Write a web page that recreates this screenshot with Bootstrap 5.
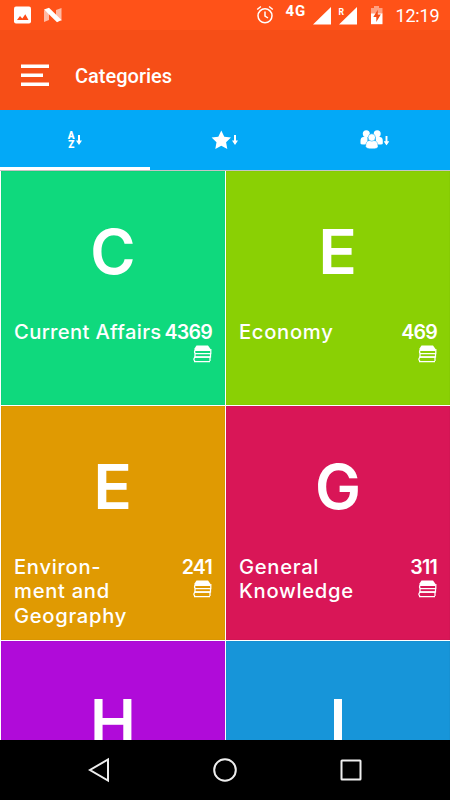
<!DOCTYPE html>
<html lang="en">
<head>
<meta charset="utf-8">
<meta name="viewport" content="width=device-width, initial-scale=1">
<title>Categories</title>
<link href="https://cdn.jsdelivr.net/npm/bootstrap@5.3.0/dist/css/bootstrap.min.css" rel="stylesheet">
<style>
html,body{height:800px;overflow:hidden}
body{font-family:Roboto,sans-serif;background:#fff}
svg{display:block;flex:none}
.screen{width:450px;height:800px}
.statusbar{height:30px;background:#ff5218}
.statusbar svg{width:450px;height:30px}
.appbar{height:80px;background:#f64e17;padding-left:21px;padding-top:11px}
.appbar h1{font-size:20px;font-weight:500;margin:0 0 0 26px;line-height:24px}
.appbar svg{margin-top:-1px}
.tabs{height:60px;background:#03a9f7}
.tabs button{border:0;background:none;padding:0;border-bottom:3px solid transparent}
.tabs button.active{border-color:#fff}
.grid{height:570px;padding-left:1px;border-top:1px solid #c5c5c5;display:grid;grid-template-columns:224px 224px;grid-auto-rows:234px;gap:1px;background:#fff;font-family:Inter,sans-serif}
.tile{padding:0 13px;box-shadow:inset 0 0 1px rgba(0,0,0,.25)}
.initial{height:149px;padding-top:35px;font-size:61.5px;font-weight:600;line-height:92px}
.initial span{display:inline-block}
.wide span{transform:scaleX(1.04)}
.label{font-size:20.2px;font-weight:500;line-height:24.4px;letter-spacing:.7px}
.label-tight{letter-spacing:.35px}
.count{width:48px;font-size:19.6px;font-weight:600;line-height:24.4px;letter-spacing:-.75px}
.count svg{margin-top:1px}
.sysbar{height:60px;padding:0 37px}
</style>
<script src="https://cdn.jsdelivr.net/npm/bootstrap@5.3.0/dist/js/bootstrap.bundle.min.js"></script>
</head>
<body>
<svg width="0" height="0" class="position-absolute">
<symbol id="books" viewBox="0 0 20 18"><path d="M4.500.5h11.500l2.500 3.500v2H2.500V3.500z" fill="#fff"/><path d="M18.800 4v4.500H3.500Q1.500 7 3.500 5M3 8.500v3.300h15.500V8.500M18 12v4M3 12.300q-2.300 1.800 0 3.700M2 16.500h16" fill="none" stroke="#fff" stroke-width="1.250"/><path d="M2 12.200h16.500" fill="none" stroke="#fff" stroke-width="1.400"/></symbol>
<symbol id="down" viewBox="0 0 6 10"><path d="M2 0h2v5.600h2L3 10 0 5.600h2z" fill="#fff"/></symbol>
</svg>
<main class="screen d-flex flex-column overflow-hidden">
<div class="statusbar">
<svg viewBox="0 0 450 30" fill="#fff">
<rect x="14" y="6.500" width="17" height="17" rx="2"/><path d="M17 20l3-4 2.300 2.500 3-4.300L28.500 20z" fill="#ff4b16"/>
<path d="M44 10v12l5-2v-7zM61.500 8l-5.500 2v8l5.500 3z" opacity=".6"/><path d="M44 9.500L49 7.700 61.500 20 57 22.300z"/>
<g fill="none" stroke="#fff" stroke-width="1.500"><circle cx="265" cy="15.800" r="7"/><path d="M265 11.500v4.500l3 2M257.200 9.500l3.700-3M272.800 9.500l-3.700-3"/></g>
<text x="285.500" y="16" font-size="15" font-weight="700" letter-spacing=".8">4G</text>
<path d="M313 24.500h18V7zM339 24.500h18V7z"/><text x="338.500" y="15" font-size="9" font-weight="700" textLength="5.500" lengthAdjust="spacingAndGlyphs">R</text>
<path d="M371 14V8h3V6h5v2h3.500v6z" opacity=".45"/><path d="M371 13.500h11.500v10.700H371z"/><path d="M377.800 9.700l-4.500 7.200h3v5l4.500-7.300h-3z" fill="#f64e17"/>
<text x="395.500" y="22" font-size="18" textLength="44">12:19</text>
</svg>
</div>
<header class="appbar d-flex align-items-center text-white">
<svg width="28" height="24" viewBox="0 0 28 24" fill="#fff"><path d="M0 1.500h28V5H0zM0 10.500h22V14H0zM0 19.500h28V23H0z"/></svg>
<h1>Categories</h1>
</header>
<nav class="tabs d-flex">
<button class="active flex-fill w-100 d-flex justify-content-center align-items-center" aria-label="Sort alphabetically">
<svg width="16" height="30" viewBox="0 0 16 30" fill="#fff" font-family="Roboto" font-weight="900" font-size="10"><text x=".8" y="15">A</text><text x="1.200" y="24.400">Z</text><use href="#down" x="9" y="11" width="6" height="10"/></svg></button>
<button class="flex-fill w-100 d-flex justify-content-center align-items-center" aria-label="Sort by rating">
<svg width="28" height="24" viewBox="0 0 28 20" fill="#fff"><path d="M10.300 1.500l3 6.200 6.700.9-4.900 4.700 1.200 6.700-6-3.200-6 3.200 1.200-6.700L.6 8.600l6.700-.9z"/><use href="#down" x="21" y="6" width="6" height="10"/></svg></button>
<button class="flex-fill w-100 d-flex justify-content-center align-items-center" aria-label="Sort by people">
<svg width="30" height="20" viewBox="0 0 30 20" fill="#fff"><circle cx="6.300" cy="4.800" r="3.500"/><circle cx="17.200" cy="4.800" r="3.500"/><path d="M.5 14.500v-2.500q0-4 3-4h4v5L5.500 15.500H3q-2.500 0-2.500-1M22.800 14.500v-2.500q0-4-3-4h-4v5l2 2.500h3q2 0 2-1"/><path d="M5.700 17.500q0-6 4-6h4q4.300 0 4.300 6 0 2.300-6 2.300t-6.300-2.300" stroke="#03a9f7" stroke-width=".4"/><circle cx="11.800" cy="8.500" r="3.700" stroke="#03a9f7" stroke-width=".5"/><use href="#down" x="23.500" y="7" width="6" height="9.500"/></svg></button>
</nav>
<section class="grid text-white overflow-hidden">
<article class="tile" style="background:#0fd97d"><div class="initial text-center"><span>C</span></div><div class="d-flex justify-content-between"><div class="label label-tight text-nowrap">Current Affairs</div><div class="count d-flex flex-column align-items-end">4369<svg width="20" height="18"><use href="#books"/></svg></div></div></article>
<article class="tile" style="background:#8ad004"><div class="initial wide text-center"><span>E</span></div><div class="d-flex justify-content-between"><div class="label">Economy</div><div class="count d-flex flex-column align-items-end">469<svg width="20" height="18"><use href="#books"/></svg></div></div></article>
<article class="tile" style="background:#e09a02"><div class="initial wide text-center"><span>E</span></div><div class="d-flex justify-content-between"><div class="label">Environ-<br>ment and<br>Geography</div><div class="count d-flex flex-column align-items-end">241<svg width="20" height="18"><use href="#books"/></svg></div></div></article>
<article class="tile" style="background:#d91657"><div class="initial text-center"><span>G</span></div><div class="d-flex justify-content-between"><div class="label">General<br>Knowledge</div><div class="count d-flex flex-column align-items-end">311<svg width="20" height="18"><use href="#books"/></svg></div></div></article>
<article class="tile" style="background:#b00bd9"><div class="initial text-center"><span>H</span></div></article>
<article class="tile" style="background:#1795d9"><div class="initial text-center"><span>I</span></div></article>
</section>
<footer class="sysbar bg-black d-flex justify-content-around align-items-center">
<svg width="24" height="26" viewBox="0 0 24 26" fill="none" stroke="#eee" stroke-width="2"><path d="M21 2.500v21L3 13z"/></svg>
<svg width="26" height="26" viewBox="0 0 26 26" fill="none" stroke="#eee" stroke-width="2"><circle cx="13" cy="13" r="10.800"/></svg>
<svg width="24" height="24" viewBox="0 0 24 24" fill="none" stroke="#eee" stroke-width="2"><rect x="2.500" y="2.500" width="19" height="19" rx=".5"/></svg>
</footer>
</main>
</body>
</html>
